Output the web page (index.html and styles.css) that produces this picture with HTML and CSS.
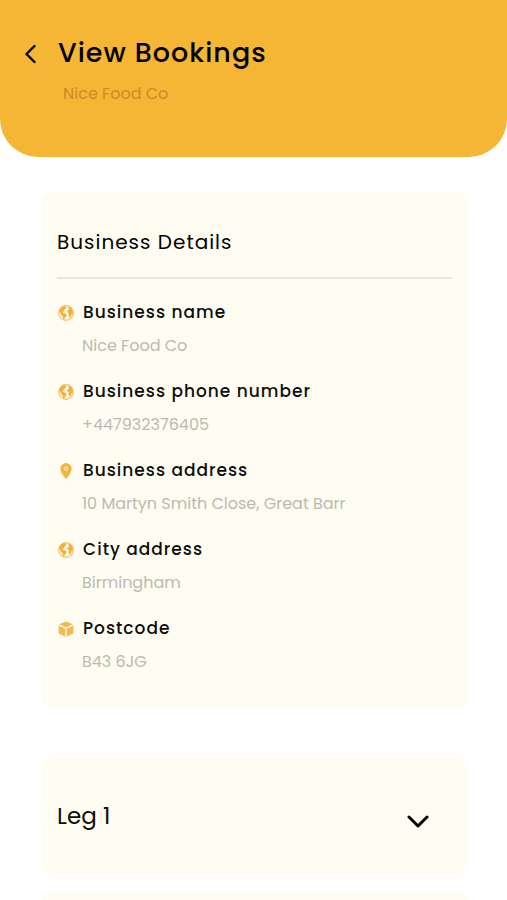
FILE: index.html
```html
<!DOCTYPE html>
<html lang="en">
<head>
<meta charset="utf-8">
<meta name="viewport" content="width=device-width, initial-scale=1">
<title>View Bookings</title>
<link rel="stylesheet" href="styles.css">
</head>
<body>
<svg class="sprite" aria-hidden="true">
  <symbol id="globe" viewBox="0 0 16 16">
    <circle cx="8" cy="8" r="7.3" fill="#fff3d9" stroke="#f6c36a" stroke-width="1.2"/>
    <path fill="#f4b03c" d="M1 6C1.800 3.500 3.600 1.600 6 1l2.200.8-.2 1.700-1.800 1.200-.2 1.500-1.600.6.600 1.200 2 .4 1.500 1.400-.8 2.200-1.200.9-.1 1.800-1.300-.6-.5-2.900-1.800-1.700-.6-1.700z"/>
    <path fill="#f4b03c" d="M10.800 1.600c1.700.7 3.100 2.200 3.900 4.200l.2 3-1.400.2-.7 2.700-1.300.7-.9-2.300.3-1.700-1.500-1.100.3-2 1.700-.8-1.100-1.400z"/>
  </symbol>
  <symbol id="pin" viewBox="0 0 16 16">
    <path fill="#f4b53f" d="M8 0a5.700 5.700 0 0 0-5.700 5.700C2.300 9.700 8 16 8 16s5.700-6.300 5.700-10.300A5.700 5.700 0 0 0 8 0z"/>
    <circle cx="8" cy="5.700" r="1.800" fill="#f8cb76" stroke="#fff0cc" stroke-width="1"/>
  </symbol>
  <symbol id="box" viewBox="0 0 16 16">
    <path fill="#f4b951" d="M8 .3 14.600 3.200 8 6.400 1.400 3.200zM.6 4.500l6.800 3.300v7.900L1.200 12.800q-.6-.3-.6-1zM15.400 4.500 8.600 7.800v7.900l6.200-2.900q.6-.3.600-1z"/>
  </symbol>
</svg>

<header class="header">
  <button class="back" type="button" aria-label="Back">
    <svg viewBox="0 0 12 20" aria-hidden="true"><path d="M10.500 2 2.500 10l8 8"/></svg>
  </button>
  <div class="heading">
    <h1>View Bookings</h1>
    <p>Nice Food Co</p>
  </div>
</header>

<main class="content">
  <section class="card details">
    <h2>Business Details</h2>
    <dl class="fields">
      <div class="field">
        <dt><svg class="icon" aria-hidden="true"><use href="#globe"/></svg>Business name</dt>
        <dd>Nice Food Co</dd>
      </div>
      <div class="field">
        <dt><svg class="icon" aria-hidden="true"><use href="#globe"/></svg>Business phone number</dt>
        <dd>+447932376405</dd>
      </div>
      <div class="field">
        <dt><svg class="icon" aria-hidden="true"><use href="#pin"/></svg>Business address</dt>
        <dd>10 Martyn Smith Close, Great Barr</dd>
      </div>
      <div class="field">
        <dt><svg class="icon" aria-hidden="true"><use href="#globe"/></svg>City address</dt>
        <dd>Birmingham</dd>
      </div>
      <div class="field">
        <dt><svg class="icon" aria-hidden="true"><use href="#box"/></svg>Postcode</dt>
        <dd>B43 6JG</dd>
      </div>
    </dl>
  </section>

  <div class="legs">
    <button class="card leg" type="button" aria-expanded="false">
      <span>Leg 1</span>
      <svg class="chevron" viewBox="0 0 22 14" aria-hidden="true"><path d="M2 2l9 9 9-9"/></svg>
    </button>
    <div class="card next"></div>
  </div>
</main>
</body>
</html>
```
FILE: styles.css
```css
* {
  box-sizing: border-box;
}

body,
h1,
h2,
p,
dl,
dd {
  margin: 0;
}

body {
  background: #fff;
  color: #0d0d0b;
  font-family: Poppins, Inter, sans-serif;
}

button {
  border: 0;
  background: none;
  color: inherit;
  font: inherit;
  cursor: pointer;
}

.sprite {
  position: absolute;
  width: 0;
  height: 0;
}

.header {
  display: flex;
  align-items: flex-start;
  gap: 16px;
  padding: 33px 24px 32px;
  min-height: 157px;
  border-radius: 0 0 38px 38px;
  background: #f5b635;
}

.back {
  display: flex;
  align-items: center;
  height: 42px;
  padding: 0 6px 0 0;
}

.back svg {
  width: 12px;
  height: 20px;
}

.back path,
.chevron path {
  fill: none;
  stroke: #000;
  stroke-width: 3;
  stroke-linecap: round;
  stroke-linejoin: round;
}

.back path {
  stroke-width: 2.4;
}

h1,
h2,
dt {
  letter-spacing: 1px;
}

h1 {
  color: #000;
  font-size: 27px;
  font-weight: 500;
  line-height: 40px;
}

.heading p {
  margin-top: 8px;
  padding-left: 5px;
  color: #c98d25;
  font-size: 16px;
  line-height: 25px;
}

.content {
  padding: 35px 39px 0 41px;
}

.card {
  border-radius: 10px;
  background: #fffdf1;
}

.details {
  padding: 32px 16px 34px;
}

h2 {
  padding: 3px 0 20px;
  border-bottom: 2px solid #e9e8df;
  color: #000;
  font-size: 20px;
  font-weight: 400;
  line-height: 30px;
}

.fields {
  display: grid;
  gap: 21px;
  padding-top: 21px;
}

dt {
  display: flex;
  align-items: center;
  gap: 9px;
  font-size: 17px;
  font-weight: 500;
  line-height: 25px;
}

dd {
  margin-top: 8px;
  padding-left: 25px;
  color: #babab4;
  font-size: 16px;
  line-height: 25px;
}

.icon {
  flex: none;
  width: 16px;
  height: 16px;
  margin-left: 1px;
}

.legs {
  display: grid;
  gap: 18px;
  margin-top: 50px;
}

.leg {
  display: flex;
  align-items: center;
  justify-content: space-between;
  width: 100%;
  min-height: 116px;
  padding: 16px 39px 16px 16px;
  font-size: 23px;
  line-height: 32px;
}

.chevron {
  width: 22px;
  height: 14px;
  margin-top: 12px;
}

.next {
  height: 8px;
  border-radius: 10px 10px 0 0;
}
```
